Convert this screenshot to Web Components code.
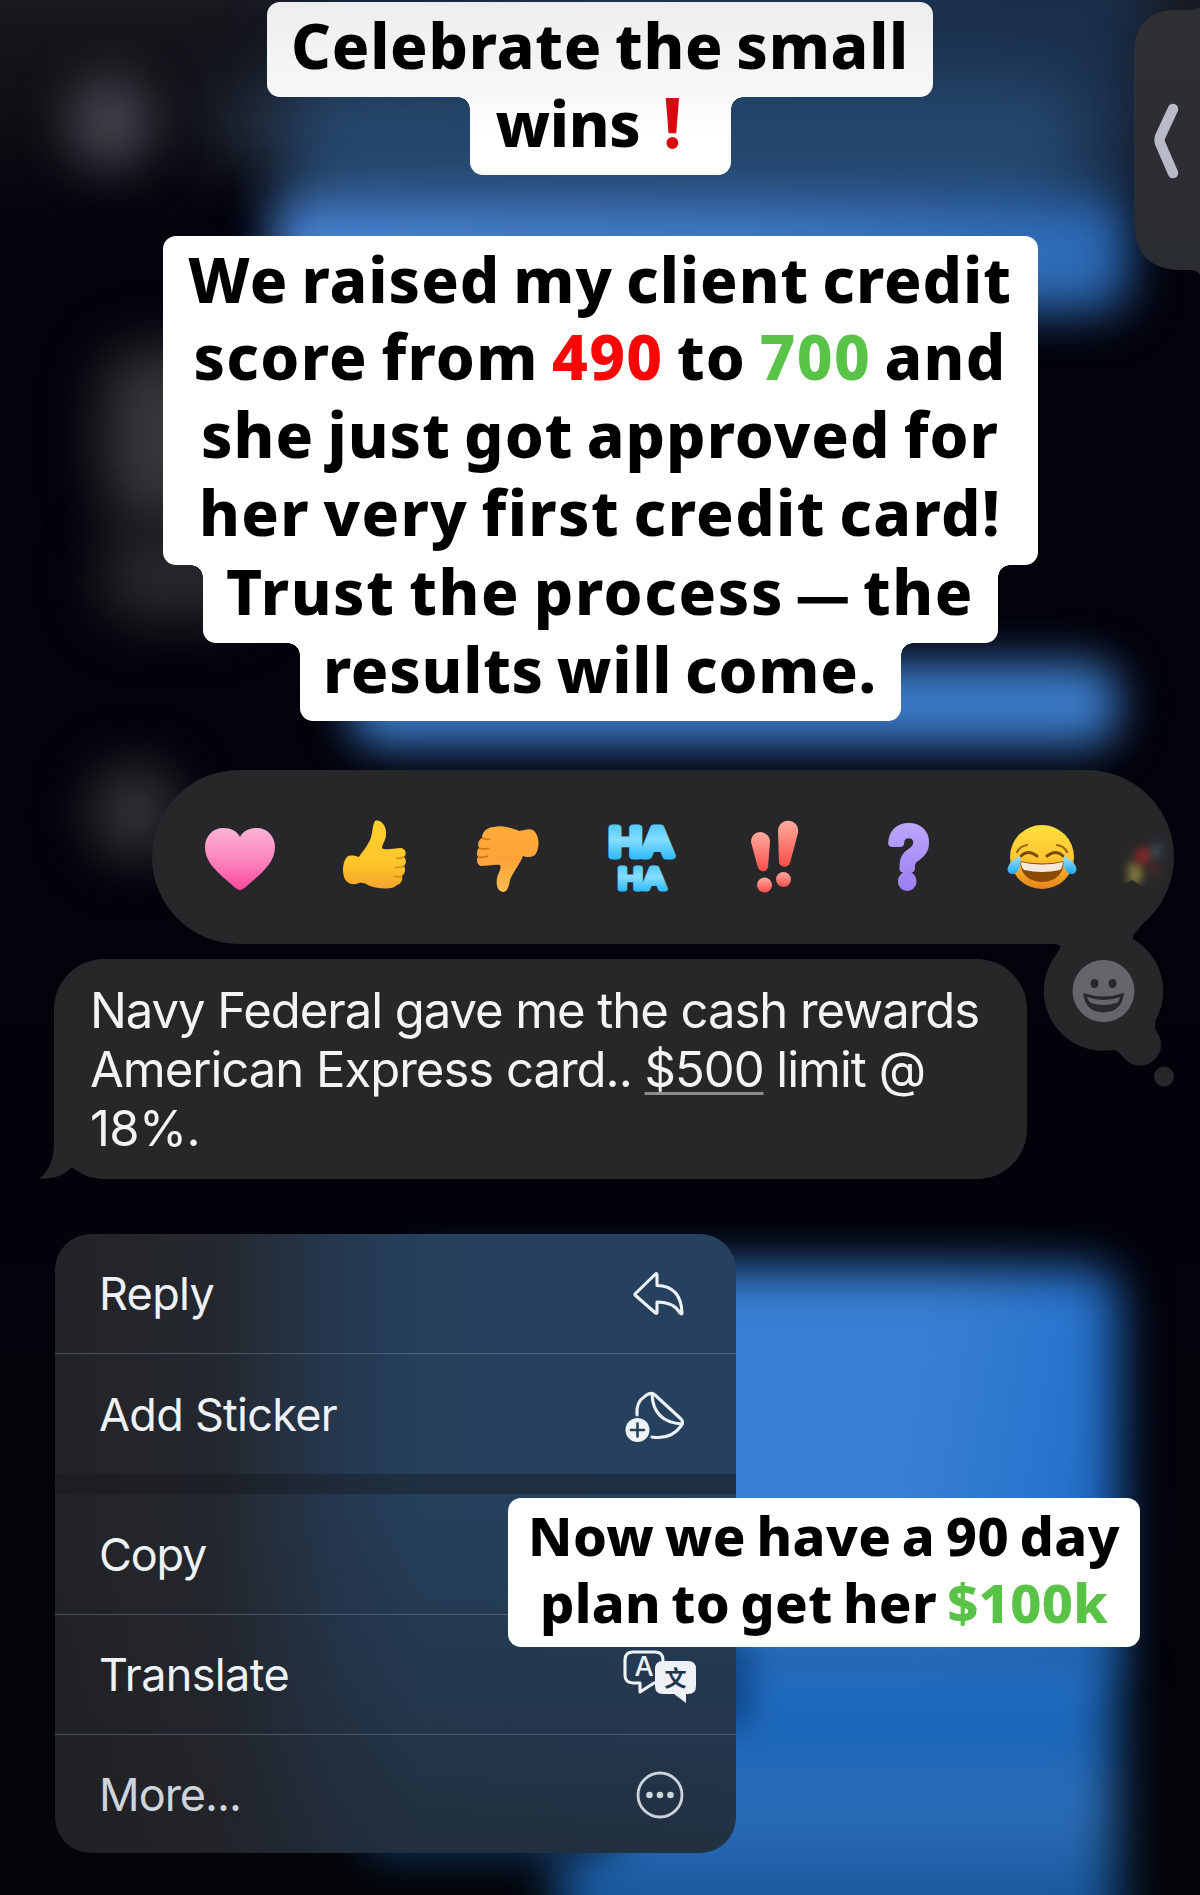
<!DOCTYPE html>
<html lang="en">
<head>
<meta charset="utf-8">
<title>Small wins</title>
<style>
    html, body {
        margin: 0;
        background: #02020a;
    }
</style>
</head>
<body>
<story-page>
    <blurred-chat slot="backdrop"></blurred-chat>
    <side-handle slot="overlay"></side-handle>

    <story-caption class="headline">
        <caption-block w="666" h="95" shift="4" tint="linear-gradient(#ededee, #f8f8f9)">
            <fit-line w="618">Celebrate the small</fit-line>
        </caption-block>
        <caption-block w="261" h="78" shift="-13" tint="linear-gradient(#f8f8f9, #fff 50%)" ears>
            <fit-line w="145" start="26">wins</fit-line>
            <heavy-mark></heavy-mark>
        </caption-block>
    </story-caption>

    <story-caption class="news">
        <caption-block w="875" h="329" shift="4.500">
            <fit-line w="824">We raised my client credit</fit-line>
            <fit-line w="813">score from <b style="color:#f90606">490</b> to <b style="color:#58c346">700</b> and</fit-line>
            <fit-line w="798">she just got approved for</fit-line>
            <fit-line w="802">her very first credit card!</fit-line>
        </caption-block>
        <caption-block w="795" h="78" shift="-12.500" ears>
            <fit-line w="748">Trust the process <b style="font-family:Inter;font-size:50px;line-height:1">—</b> the</fit-line>
        </caption-block>
        <caption-block w="601" h="78" shift="-12.500" ears>
            <fit-line w="554">results will come.</fit-line>
        </caption-block>
    </story-caption>

    <reaction-bar></reaction-bar>

    <message-bubble>
        <fit-line w="889">Navy Federal gave me the cash rewards</fit-line>
        <fit-line w="835">American Express card.. <u>$500</u> limit @</fit-line>
        <fit-line w="110">18%.</fit-line>
    </message-bubble>

    <context-menu>
        <menu-item icon="reply" h="120" w="115">Reply</menu-item>
        <menu-item icon="sticker" h="120" w="238">Add Sticker</menu-item>
        <menu-gap></menu-gap>
        <menu-item icon="none" h="121" w="107">Copy</menu-item>
        <menu-item icon="translate" h="120" w="190">Translate</menu-item>
        <menu-item icon="more" h="118" w="142" dim>More...</menu-item>
    </context-menu>

    <story-caption class="plan" slot="overlay">
        <caption-block w="632" h="149" shift="4">
            <fit-line w="592">Now we have a 90 day</fit-line>
            <fit-line w="568">plan to get her <b style="color:#58c346">$100k</b></fit-line>
        </caption-block>
    </story-caption>
</story-page>

<script>
class BaseElement extends HTMLElement {
    constructor() {
        super();
        this.attachShadow({mode: 'open'});
    }

    connectedCallback() {
        this.render();
    }

    render() {
        this.shadowRoot.innerHTML = `<style>${this.css}</style>${this.template}`;
    }

    get css() {
        return '';
    }

    get template() {
        return '<slot></slot>';
    }
}

class StoryPage extends BaseElement {
    get css() {
        return `
        :host {
            display: block;
            position: relative;
            width: 1200px;
            height: 1895px;
            overflow: hidden;
        }
        main {
            position: relative;
            display: flex;
            flex-direction: column;
            align-items: flex-start;
            padding-top: 2px;
            box-sizing: border-box;
        }
        ::slotted(story-caption) {
            align-self: center;
        }
        ::slotted(.headline) {
            --size: 62px;
            --line: 78px;
        }
        ::slotted(.news) {
            --size: 62px;
            --line: 77.8px;
            margin-top: 61px;
        }
        ::slotted(.plan) {
            --size: 54px;
            --line: 67.4px;
            position: absolute;
            left: 508px;
            top: 1498px;
        }
        ::slotted(reaction-bar) {
            margin: 49px 0 0 152px;
        }
        ::slotted(message-bubble) {
            margin: 15px 0 0 54px;
        }
        ::slotted(context-menu) {
            margin: 55px 0 0 55px;
        }
        `;
    }

    get template() {
        return `
        <slot name="backdrop"></slot>
        <main><slot></slot></main>
        <slot name="overlay"></slot>
        `;
    }
}

class BlurredChat extends BaseElement {
    get css() {
        return `
        :host {
            position: absolute;
            inset: 0;
            overflow: hidden;
            background: linear-gradient(#18191f, #0d0e14 130px, #03030b 230px, #02020a 1200px, #040509);
        }
        i {
            position: absolute;
            left: var(--x);
            top: var(--y);
            width: var(--w);
            height: var(--h);
            background: var(--c);
            filter: blur(var(--b, 22px));
            border-radius: var(--r, 30px);
        }
        `;
    }

    get template() {
        const blobs = [
            [300, -60, 850, 270, 'linear-gradient(90deg, #16243a, #1c3450 40%, #1a2f4b)', 32, 30],
            [210, 80, 240, 80, '#222a38', 30, 30],
            [68, 76, 84, 92, '#45414a', 24, 50],
            [290, 80, 790, 130, '#25486f', 34, 30],
            [272, 196, 856, 116, 'linear-gradient(90deg, #4783d2, #3e79c3 60%, #2a69b5)', 24, 30],
            [104, 350, 120, 175, '#37373b', 28, 40],
            [100, 530, 150, 90, '#2a2a2e', 28, 40],
            [350, 662, 768, 84, '#3a7ac6', 22, 30],
            [90, 765, 90, 95, '#333338', 26, 50],
            [400, 1268, 718, 400, 'linear-gradient(100deg, #377fd3 70%, #1c6bc9)', 24, 30],
            [560, 1640, 556, 330, 'linear-gradient(#2c74c6, #1865b9 25%, #2c6eb8 50%, #145499 85%)', 24, 30],
            [715, 1640, 36, 90, '#0f4788', 14, 20],
            [360, 1790, 260, 70, '#0d2e52', 18, 30],
        ];
        return blobs.map(([x, y, w, h, c, b, r]) =>
            `<i style="--x:${x}px;--y:${y}px;--w:${w}px;--h:${h}px;--c:${c};--b:${b}px;--r:${r}px"></i>`
        ).join('');
    }
}

class SideHandle extends BaseElement {
    get css() {
        return `
        :host {
            position: absolute;
            right: 0;
            top: 5px;
            width: 66px;
            height: 272px;
        }
        svg { display: block; }
        `;
    }

    get template() {
        return `
        <svg width="66" height="272" viewBox="0 0 66 272">
            <defs><linearGradient id="h" x1="0" y1="0" x2="0" y2="1">
                <stop offset="0" stop-color="#2e3032"/><stop offset="1" stop-color="#292c31"/>
            </linearGradient></defs>
            <path fill="url(#h)" d="M66 2Q63 5 57 5H44Q0 5 0 50V216Q0 263 44 265H57Q63 265 66 270Z"/>
            <path d="M39 104L26 132Q25 135 26 138L39 168" fill="none" stroke="#b8bac8" stroke-width="10.5" stroke-linecap="round" stroke-linejoin="round"/>
        </svg>
        `;
    }
}

class StoryCaption extends BaseElement {
    get css() {
        return `
        :host {
            display: flex;
            flex-direction: column;
            align-items: center;
            font: 800 var(--size)/var(--line) "Noto Sans", "Open Sans", sans-serif;
            word-spacing: -4px;
            color: #000;
        }
        `;
    }
}

class CaptionBlock extends BaseElement {
    get css() {
        const ears = this.hasAttribute('ears');
        return `
        :host {
            display: block;
            position: relative;
            box-sizing: border-box;
            width: ${this.getAttribute('w')}px;
            height: ${this.getAttribute('h')}px;
            background: ${this.getAttribute('tint') || '#fff'};
            border-radius: ${ears ? '0 0 13px 13px' : '13px'};
            text-align: center;
        }
        div {
            position: relative;
            top: ${this.getAttribute('shift')}px;
        }
        ${ears ? `
        :host::before, :host::after {
            content: "";
            position: absolute;
            top: 0;
            width: 12px;
            height: 12px;
        }
        :host::before {
            right: 100%;
            background: radial-gradient(circle at 0 100%, transparent 11.5px, #fff 12px);
        }
        :host::after {
            left: 100%;
            background: radial-gradient(circle at 100% 100%, transparent 11.5px, #fff 12px);
        }` : ''}
        `;
    }

    get template() {
        return '<div><slot></slot></div>';
    }
}

// A single text line that spreads its letters to fill the given width.
class FitLine extends BaseElement {
    get css() {
        return `
        :host {
            display: block;
            white-space: nowrap;
        }
        :host([start]) {
            text-align: left;
            padding-left: ${this.getAttribute('start')}px;
        }
        span { display: inline-block; }
        ::slotted(b) { font-weight: inherit; }
        ::slotted(u) {
            text-decoration: underline #8c8c8e 3px;
            text-underline-offset: 5px;
            text-decoration-skip-ink: none;
        }
        `;
    }

    get template() {
        return '<span><slot></slot></span>';
    }

    render() {
        super.render();
        const span = this.shadowRoot.querySelector('span');
        const count = this.textContent.length;
        const spare = Number(this.getAttribute('w')) - span.getBoundingClientRect().width;
        span.style.letterSpacing = `${spare / count}px`;
    }
}

class HeavyMark extends BaseElement {
    get css() {
        return `
        :host {
            position: absolute;
            left: 174px;
            top: 1px;
            width: 58px;
            font: 400 69px/78px "DejaVu Sans", sans-serif;
            color: #d90611;
        }
        `;
    }

    get template() {
        return '&#x2757;&#xfe0e;';
    }
}

const REACTIONS = {
    heart: `
        <defs><linearGradient id="g" x1="0" y1="0" x2="0" y2="1">
            <stop offset="0" stop-color="#fbb3d6"/><stop offset=".5" stop-color="#fd86be"/><stop offset="1" stop-color="#fb4a9c"/>
        </linearGradient></defs>
        <path fill="url(#g)" d="M40 71C38 71 35 69 31 65C17 53 5 43 5 28C5 17 13 9 23 9C31 9 37 12 40 18C43 12 49 9 57 9C67 9 75 17 75 28C75 43 63 53 49 65C45 69 42 71 40 71Z"/>`,
    up: `
        <defs><linearGradient id="g" x1="0" y1="0" x2="0" y2="1">
            <stop offset="0" stop-color="#ffd02e"/><stop offset=".6" stop-color="#ffc62b"/><stop offset="1" stop-color="#f5a52d"/>
        </linearGradient></defs>
        <path fill="url(#g)" d="M41 2C46 0 53 6 52 16C52 21 48 25 48 29C51 32 61 29 67 29C72 30 73 35 70 38C72 40 73 44 70 47C72 50 71 55 68 57C69 61 67 65 63 66C59 71 44 70 36 67C31 64 28 63 25 64C18 67 12 64 10 58C8 51 9 41 14 37C18 36 22 37 25 38C27 34 33 28 36 21C39 14 38 7 41 2Z"/>
        <path d="M62 39Q66 40 70 38M61 48Q66 49 70 47M60 57Q65 59 68 57" fill="none" stroke="#d99013" stroke-width="1.6"/>`,
    down: `
        <defs><linearGradient id="g" x1="0" y1="0" x2="0" y2="1">
            <stop offset="0" stop-color="#ffac39"/><stop offset=".5" stop-color="#fea33a"/><stop offset="1" stop-color="#ffbd50"/>
        </linearGradient></defs>
        <path fill="url(#g)" transform="translate(2 0)" d="M34 73C28 72 27 65 28 59C29 54 33 50 31 46C26 45 17 47 12 47C8 46 7 41 9 38C7 35 8 31 10 29C8 25 10 20 13 19C13 13 18 8 25 8C33 6 43 9 50 12C56 11 60 9 64 11C71 16 71 30 66 36C62 39 56 38 54 37C51 45 44 53 41 61C40 66 39 73 34 73Z"/>
        <path d="M15 19Q19 21 23 20M12 29Q17 31 22 29M11 38Q17 39 21 37" fill="none" stroke="#cf7415" stroke-width="1.6"/>`,
    haha: `
        <defs><linearGradient id="g" x1="0" y1="0" x2="0" y2="1">
            <stop offset="0" stop-color="#3cc4fa"/><stop offset=".45" stop-color="#85ddff"/><stop offset="1" stop-color="#14aef6"/>
        </linearGradient></defs>
        <g font-family="Inter, sans-serif" font-weight="500" fill="url(#g)" stroke="url(#g)" stroke-linejoin="round">
            <text x="8" y="37" font-size="38" stroke-width="7" textLength="64" lengthAdjust="spacingAndGlyphs">HA</text>
            <text x="17" y="69.500" font-size="28" stroke-width="5" textLength="48" lengthAdjust="spacingAndGlyphs">HA</text>
        </g>`,
    bang: `
        <defs><linearGradient id="g" x1="0" y1="0" x2="0" y2="1">
            <stop offset="0" stop-color="#ffaca0"/><stop offset="1" stop-color="#fa4e49"/>
        </linearGradient></defs>
        <g fill="url(#g)" transform="translate(1 0)">
            <path d="M16 23C16 16 21 13 26 13C31 14 35 17 35 23L33 48C32 53 26 54 23 49Z"/>
            <path d="M43 11C44 4 50 1 55 2C61 3 64 8 63 14L55 44C53 49 46 49 44 44Z"/>
            <circle cx="29.500" cy="66" r="7.500"/><circle cx="48.500" cy="60.500" r="7.500"/>
        </g>`,
    question: `
        <defs><linearGradient id="g" x1="0" y1="0" x2="0" y2="1">
            <stop offset="0" stop-color="#c3afff"/><stop offset="1" stop-color="#9576f0"/>
        </linearGradient></defs>
        <text x="21" y="67" font-family="Inter, sans-serif" font-weight="500" font-size="80" fill="url(#g)" stroke="url(#g)" stroke-width="8" stroke-linejoin="round" textLength="40" lengthAdjust="spacingAndGlyphs">?</text>`,
    joy: `
        <defs>
            <linearGradient id="g" x1="0" y1="0" x2="0" y2="1">
                <stop offset="0" stop-color="#ffdf3e"/><stop offset=".5" stop-color="#ffc730"/><stop offset="1" stop-color="#e68319"/>
            </linearGradient>
            <linearGradient id="t" x1="0" y1="0" x2="0" y2="1">
                <stop offset="0" stop-color="#9fe4ff"/><stop offset="1" stop-color="#22a6f4"/>
            </linearGradient>
        </defs>
        <circle cx="40" cy="38" r="32" fill="url(#g)"/>
        <path d="M19 37Q26 30 35 37M45 37Q54 30 61 37" fill="none" stroke="#7c4b0a" stroke-width="3" stroke-linecap="round"/>
        <path d="M15 33Q18 27 25 26M65 33Q62 27 55 26" fill="none" stroke="#9c6510" stroke-width="2.2" stroke-linecap="round"/>
        <path d="M18 42Q40 47 62 42Q61 62 40 63Q19 62 18 42Z" fill="#894a05"/>
        <path d="M19 43Q40 48 61 43Q61 48 58 51Q40 55 22 51Q19 48 19 43Z" fill="#f6e9dc"/>
        <path d="M18 37Q20 48 14 54C9 57 4 53 6 48Q8 42 18 37ZM62 37Q60 48 66 54C71 57 76 53 74 48Q72 42 62 37Z" fill="url(#t)"/>`,
};

class ReactionIcon extends BaseElement {
    get css() {
        return `
        :host {
            display: block;
            width: 80px;
            height: 76px;
        }
        svg {
            display: block;
            overflow: visible;
        }
        `;
    }

    get template() {
        return `<svg width="80" height="76" viewBox="0 0 80 76">${REACTIONS[this.getAttribute('name')]}</svg>`;
    }
}

class ReactionBar extends BaseElement {
    get css() {
        return `
        :host {
            display: flex;
            align-items: center;
            position: relative;
            box-sizing: border-box;
            width: 1022px;
            height: 174px;
            padding: 0 0 0 48px;
            gap: 53.6px;
            border-radius: 87px;
            background: #272729;
        }
        .tail {
            position: absolute;
            left: 880px;
            top: 100px;
            z-index: 1;
        }
        .next {
            position: absolute;
            right: 6px;
            top: 67px;
            filter: blur(4px);
            opacity: .6;
        }
        `;
    }

    get template() {
        const icons = Object.keys(REACTIONS).map(name => `<reaction-icon name="${name}"></reaction-icon>`);
        return `
        ${icons.join('')}
        <svg class="next" width="44" height="54" viewBox="0 0 44 54">
            <circle cx="19" cy="19" r="8.500" fill="#c5271f"/>
            <path d="M28 8L38 5L36 21L26 21Z" fill="#3e6278"/>
            <path d="M4 25L19 31L17 45L5 50Z" fill="#c0b248"/>
            <path d="M25 31L35 27L33 43Z" fill="#71302a"/>
        </svg>
        <svg class="tail" width="150" height="220" viewBox="0 0 150 220">
            <g fill="#272729">
                <path d="M10 60V74H18Q30 74 28 78L18 96L60 110H110L108 76Q98 70 102 64L131 30L100 10Z"/>
                <circle cx="71.500" cy="121" r="59.700"/>
                <circle cx="108" cy="174.500" r="21"/>
                <path d="M74 179Q86 178 93 189L127 166Q121 160 124 150Z"/>
                <circle cx="132" cy="206.500" r="10"/>
            </g>
            <circle cx="71.500" cy="121" r="31" fill="#66666a"/>
            <ellipse cx="62.500" cy="113.500" rx="4" ry="4.600" fill="#29292b"/>
            <ellipse cx="80.500" cy="113.500" rx="4" ry="4.600" fill="#29292b"/>
            <path d="M51 123Q71.500 130 92 123Q90 142 71.500 142.500Q53 142 51 123Z" fill="#29292b"/>
            <path d="M55 127Q71.500 133 88 127Q87 132 84 133Q71 137 59 133Q56 131 55 127Z" fill="#66666a"/>
        </svg>
        `;
    }
}

class MessageBubble extends BaseElement {
    get css() {
        return `
        :host {
            display: block;
            position: relative;
            box-sizing: border-box;
            width: 973px;
            height: 220px;
            padding: 23px 36px 0;
            border-radius: 50px;
            background: #272729;
            color: #f4f4f5;
            font: 400 49px/58.8px Inter, "Liberation Sans", sans-serif;
        }
        svg {
            position: absolute;
            left: -15px;
            bottom: 0;
        }
        `;
    }

    get template() {
        return `
        <svg width="50" height="60" viewBox="0 0 50 60">
            <path fill="#272729" d="M15 0V22Q15 50 0 59.500Q21 61 33 48L48 20Z"/>
        </svg>
        <slot></slot>
        `;
    }
}

const MENU_ICONS = {
    none: '',
    reply: `
        <path d="M15 35L35.500 15Q37 14 37 16V26.500Q61 27 62 54Q62 56 60 54Q54 43 37 43V53.500Q37 55 35.500 54L15 36Q14.500 35.500 15 35Z"/>`,
    sticker: `
        <path d="M17 35Q16 22 24 17Q31 11 35 15L61 39Q64 42 61 46Q51 60 32 57"/>
        <path d="M32 14Q33 42 62 44"/>
        <circle cx="17.500" cy="50" r="12" fill="currentColor" stroke="none"/>
        <path d="M17.500 43.500V56.500M11 50H24" stroke="#26405b" stroke-width="2.600"/>`,
    translate: `
        <path d="M34 43L20 52V43H13Q5 43 5 35V20Q5 12 13 12H35Q43 12 43 20V22"/>
        <text x="24" y="36" font-family="Inter, sans-serif" font-size="27" font-weight="500" text-anchor="middle">A</text>
        <path d="M43 21H68Q76 21 76 29V46Q76 54 68 54H66V63L54 54H43Q35 54 35 46V29Q35 21 43 21Z" fill="currentColor" stroke="none"/>
        <text class="cut" x="55.500" y="46" font-family="'Noto Sans CJK SC', sans-serif" font-size="22" font-weight="700" text-anchor="middle">文</text>`,
    more: `
        <circle cx="40" cy="35" r="22" stroke-width="2.800"/>
        <g fill="currentColor" stroke="none"><circle cx="29.500" cy="35" r="3.300"/><circle cx="40" cy="35" r="3.300"/><circle cx="50.500" cy="35" r="3.300"/></g>`,
};

class MenuItem extends BaseElement {
    get css() {
        return `
        :host {
            display: flex;
            align-items: center;
            justify-content: space-between;
            box-sizing: border-box;
            height: ${this.getAttribute('h')}px;
            padding: 1px 36.5px 0 44px;
            color: #eef2f6;
        }
        :host([dim]) { color: #ced4dc; }
        svg {
            display: block;
            overflow: visible;
            fill: none;
            stroke: currentColor;
            stroke-width: 3.1px;
            stroke-linecap: round;
            stroke-linejoin: round;
        }
        text { fill: currentColor; stroke: none; }
        .cut { fill: #22354d; }
        `;
    }

    get template() {
        return `
        <fit-line w="${this.getAttribute('w')}">${this.textContent}</fit-line>
        <svg width="80" height="70" viewBox="0 0 80 70">${MENU_ICONS[this.getAttribute('icon')]}</svg>
        `;
    }
}

class MenuGap extends BaseElement {
    get css() {
        return `
        :host {
            display: block;
            height: 20px;
            background: rgba(20, 23, 28, .4);
        }
        `;
    }
}

class ContextMenu extends BaseElement {
    get css() {
        return `
        :host {
            display: block;
            width: 681px;
            height: 619px;
            overflow: hidden;
            border-radius: 36px;
            background:
                linear-gradient(rgba(32, 33, 36, 0) 45%, rgba(30, 31, 35, .5)),
                linear-gradient(90deg, #222326, #24282e 24%, #253850 42%, #25405b 54%, #26415f);
            font: 400 45px/56px Inter, "Liberation Sans", sans-serif;
        }
        ::slotted(menu-item:not([icon="sticker"]):not([icon="more"])) {
            border-bottom: 1.5px solid rgba(160, 180, 200, .32);
        }
        `;
    }
}

// fit-line measures its text, so the elements that set its font are defined before it.
customElements.define('story-page', StoryPage);
customElements.define('blurred-chat', BlurredChat);
customElements.define('side-handle', SideHandle);
customElements.define('story-caption', StoryCaption);
customElements.define('caption-block', CaptionBlock);
customElements.define('heavy-mark', HeavyMark);
customElements.define('reaction-icon', ReactionIcon);
customElements.define('reaction-bar', ReactionBar);
customElements.define('message-bubble', MessageBubble);
customElements.define('context-menu', ContextMenu);
customElements.define('fit-line', FitLine);
customElements.define('menu-item', MenuItem);
customElements.define('menu-gap', MenuGap);
</script>
</body>
</html>
